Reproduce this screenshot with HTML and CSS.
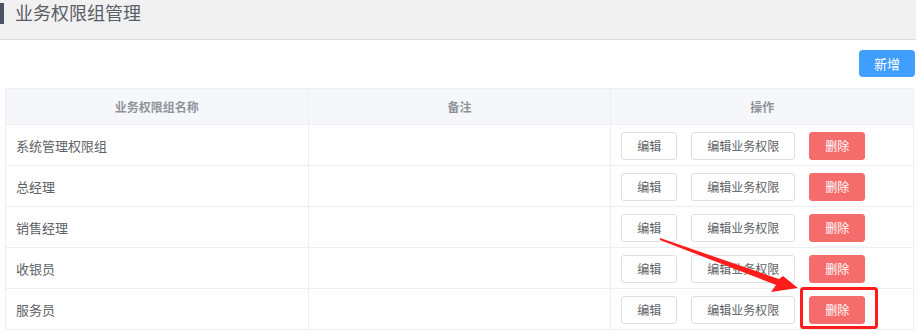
FILE: index.html
```html
<!DOCTYPE html>
<html lang="zh-CN">
<head>
    <meta charset="UTF-8">
    <meta name="viewport" content="width=device-width, initial-scale=1.0">
    <title>业务权限组管理</title>
    <link rel="stylesheet" href="styles.css">
</head>
<body>
    <div class="page-header">
        <h1 class="page-title">业务权限组管理</h1>
    </div>

    <div class="toolbar">
        <button class="btn-primary">新增</button>
    </div>

    <table class="group-table">
        <thead>
            <tr>
                <th>业务权限组名称</th>
                <th>备注</th>
                <th>操作</th>
            </tr>
        </thead>
        <tbody>
            <tr>
                <td>系统管理权限组</td>
                <td></td>
                <td>
                    <div class="actions">
                        <button class="btn">编辑</button>
                        <button class="btn">编辑业务权限</button>
                        <button class="btn btn-danger">删除</button>
                    </div>
                </td>
            </tr>
            <tr>
                <td>总经理</td>
                <td></td>
                <td>
                    <div class="actions">
                        <button class="btn">编辑</button>
                        <button class="btn">编辑业务权限</button>
                        <button class="btn btn-danger">删除</button>
                    </div>
                </td>
            </tr>
            <tr>
                <td>销售经理</td>
                <td></td>
                <td>
                    <div class="actions">
                        <button class="btn">编辑</button>
                        <button class="btn">编辑业务权限</button>
                        <button class="btn btn-danger">删除</button>
                    </div>
                </td>
            </tr>
            <tr>
                <td>收银员</td>
                <td></td>
                <td>
                    <div class="actions">
                        <button class="btn">编辑</button>
                        <button class="btn">编辑业务权限</button>
                        <button class="btn btn-danger">删除</button>
                    </div>
                </td>
            </tr>
            <tr>
                <td>服务员</td>
                <td></td>
                <td>
                    <div class="actions">
                        <button class="btn">编辑</button>
                        <button class="btn">编辑业务权限</button>
                        <button class="btn btn-danger">删除</button>
                    </div>
                </td>
            </tr>
        </tbody>
    </table>

    <!-- annotation drawn over the screenshot -->
    <svg class="annotation" width="916" height="331" viewBox="0 0 916 331">
        <polygon points="660,238 779,279 783,276 798,288 771,292 776,285 660,240" fill="#ff1c1c"/>
        <rect x="801.5" y="288.5" width="75" height="39" rx="2" fill="none" stroke="#ff1c1c" stroke-width="3"/>
    </svg>
</body>
</html>
```

FILE: styles.css
```css
body {
    margin: 0;
    font-family: "Noto Sans CJK SC", "Noto Sans", sans-serif;
    background-color: #fff;
    color: #606266;
    position: relative;
    overflow: hidden;
}
.page-header {
    height: 40px;
    background-color: #f1f1f1;
    border-bottom: 1px solid #dcdcdc;
    padding-top: 3px;
    box-sizing: border-box;
}
.page-title {
    margin: 0;
    height: 21px;
    line-height: 19px;
    padding-left: 11px;
    border-left: 4px solid #4b5465;
    font-size: 18px;
    font-weight: normal;
    color: #5a5e66;
}
.toolbar {
    display: flex;
    justify-content: flex-end;
    padding: 10px 1px 0 0;
    height: 37px;
    box-sizing: border-box;
    margin-bottom: 11px;
}
.btn-primary {
    width: 56px;
    height: 27px;
    padding: 0;
    background-color: #409eff;
    color: #fff;
    border: none;
    border-radius: 4px;
    font-family: inherit;
    font-size: 13px;
}
.group-table {
    width: 909px;
    margin-left: 5px;
    border-collapse: collapse;
    table-layout: fixed;
    border: 1px solid #ebeef5;
}
.group-table th,
.group-table td {
    border: 1px solid #ebeef5;
    padding: 0 10px;
    text-align: left;
}
.group-table th {
    height: 35px;
    background-color: #f5f7fa;
    color: #909399;
    font-size: 12px;
    font-weight: bold;
    text-align: center;
}
.group-table td {
    height: 40px;
    font-size: 13px;
    color: #606266;
}
.actions {
    display: flex;
    gap: 14px;
    padding-top: 1px;
}
.btn {
    height: 28px;
    padding: 0 15px;
    background-color: #fff;
    border: 1px solid #dcdfe6;
    border-radius: 3px;
    color: #606266;
    font-family: inherit;
    font-size: 12px;
    line-height: 26px;
}
.btn-danger {
    background-color: #f56c6c;
    border-color: #f56c6c;
    color: #fff;
}
.annotation {
    position: absolute;
    top: 0;
    left: 0;
    pointer-events: none;
}
```
